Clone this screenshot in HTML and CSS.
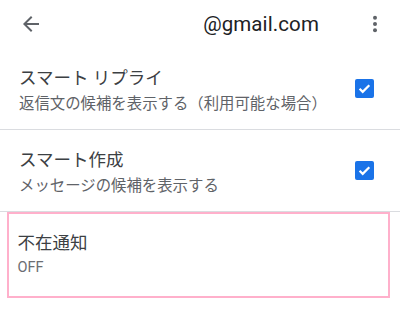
FILE: index.html
```html
<!DOCTYPE html>
<html lang="ja">
<head>
<meta charset="utf-8">
<link rel="stylesheet" href="styles.css">
</head>
<body>
<div class="app">
  <header class="bar">
    <svg class="icon back" viewBox="0 0 24 24" width="24" height="24"><path d="M20 11H7.83l5.59-5.59L12 4l-8 8 8 8 1.41-1.41L7.83 13H20v-2z" fill="#5f6368"/></svg>
    <div class="account">@gmail.com</div>
    <svg class="icon more" viewBox="0 0 24 24" width="24" height="24"><circle cx="12" cy="5.7" r="2" fill="#5f6368"/><circle cx="12" cy="12" r="2" fill="#5f6368"/><circle cx="12" cy="18.3" r="2" fill="#5f6368"/></svg>
  </header>
  <div class="row">
    <div class="texts">
      <div class="title">スマート リプライ</div>
      <div class="sub">返信文の候補を表示する（利用可能な場合）</div>
    </div>
    <div class="check"><svg viewBox="0 0 19 19" width="19" height="19"><path d="M4.6 9.8l3.1 3.1 6.6-6.6" fill="none" stroke="#fff" stroke-width="2.2"/></svg></div>
  </div>
  <div class="row">
    <div class="texts">
      <div class="title">スマート作成</div>
      <div class="sub">メッセージの候補を表示する</div>
    </div>
    <div class="check"><svg viewBox="0 0 19 19" width="19" height="19"><path d="M4.6 9.8l3.1 3.1 6.6-6.6" fill="none" stroke="#fff" stroke-width="2.2"/></svg></div>
  </div>
  <div class="row plain">
    <div class="texts">
      <div class="title">不在通知</div>
      <div class="sub latin">OFF</div>
    </div>
  </div>
</div>
</body>
</html>
```
FILE: styles.css
```css
html, body {
  margin: 0;
  padding: 0;
  background: #fff;
}
body {
  font-family: Roboto, "Noto Sans CJK JP", sans-serif;
  color: #3c4043;
}
.app {
  width: 400px;
}
.bar {
  height: 48px;
  display: flex;
  align-items: center;
  padding: 0 13px 0 19px;
  box-sizing: border-box;
}
.icon {
  display: block;
  flex: none;
}
.account {
  margin-left: auto;
  margin-right: 44px;
  font-size: 20.5px;
  color: #202124;
  letter-spacing: 0.1px;
}
.row {
  height: 82px;
  display: flex;
  align-items: center;
  padding: 0 26px 0 19px;
  border-bottom: 1px solid #dadce0;
  box-sizing: border-box;
}
.texts {
  flex: 1;
  padding-top: 3px;
}
.title {
  font-size: 17.5px;
  line-height: 24px;
  color: #3c4043;
}
.sub {
  font-size: 15.4px;
  line-height: 22px;
  margin-top: 3px;
  color: #5f6368;
}
.check {
  width: 19px;
  height: 19px;
  border-radius: 2px;
  background: #1a73e8;
  flex: none;
}
.check svg {
  display: block;
}
.row.plain {
  border: 2.5px solid #ffb0cb;
  margin: 0 10px 0 6.5px;
  padding-left: 9px;
  height: 86px;
}
.row.plain .texts {
  padding-top: 0;
}
.latin {
  font-size: 14.5px;
  margin-top: 2px;
  color: #6b6e72;
}
```
